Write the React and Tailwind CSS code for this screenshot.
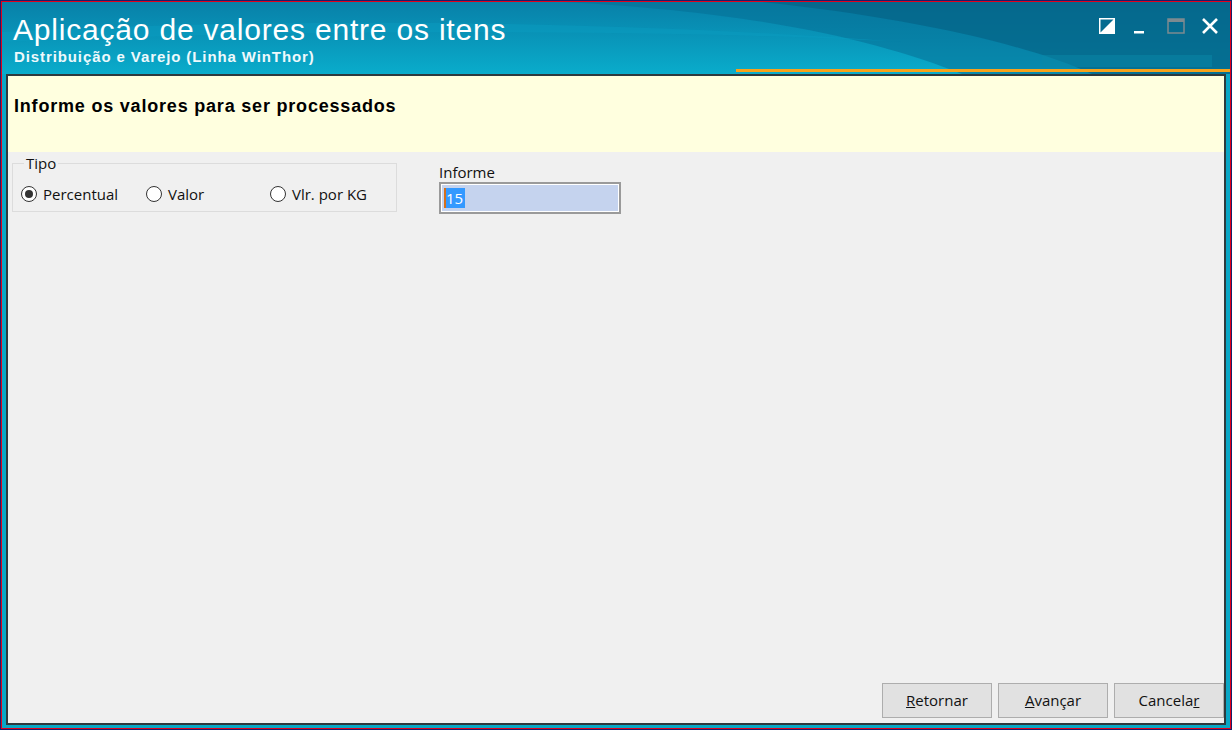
import React from 'react';

function Radio({ checked, label, className = '' }) {
  return (
    <label className={`flex items-center gap-[6px] ${className}`}>
      <span className="flex h-[16px] w-[16px] items-center justify-center rounded-full border border-[#333] bg-white">
        {checked && <span className="h-[8px] w-[8px] rounded-full bg-[#333]" />}
      </span>
      <span>{label}</span>
    </label>
  );
}

function Btn({ children }) {
  return (
    <button className="h-[35px] w-[110px] border border-[#adadad] bg-[#e1e1e1] text-[15px] text-[#111]">
      {children}
    </button>
  );
}

export default function App() {
  return (
    <div className="h-[730px] w-[1232px] border border-[#16206b] bg-[#16206b]" style={{ fontFamily: '"Open Sans", sans-serif' }}>
      <div className="flex h-full w-full flex-col border border-[#e4001b] bg-[#0aa7c6]">
        {/* title bar */}
        <div className="relative h-[72px] shrink-0 overflow-hidden bg-gradient-to-b from-[#0880a8] to-[#0aaccb]">
          <svg className="absolute inset-0" width="1228" height="72" viewBox="0 0 1228 72">
            <path d="M560 0 C760 10 880 40 960 72 L1228 72 L1228 0 Z" fill="#066f95" opacity="0.55" />
            <path d="M760 0 C900 15 1020 40 1090 72 L1228 72 L1228 0 Z" fill="#055f82" opacity="0.6" />
            <path d="M0 30 C300 15 600 18 900 40 C700 28 300 26 0 40 Z" fill="#0a9bc0" opacity="0.5" />
            <path d="M1040 53 L1210 53 L1210 65 L1040 65 Z" fill="#0a87a8" opacity="0.5" />
          </svg>
          <div className="relative pl-[11px] pt-[11px] text-white" style={{ fontFamily: '"Liberation Sans", Arial, sans-serif' }}>
            <div className="text-[30px] leading-[34px] tracking-[0.8px]">Aplicação de valores entre os itens</div>
            <div className="mt-[1px] pl-[1px] text-[15px] font-bold leading-[17px] tracking-[0.9px] text-[#eef9fc]">Distribuição e Varejo (Linha WinThor)</div>
          </div>
          <div className="absolute right-[11px] top-[15px] flex items-center">
            <svg width="16" height="16" viewBox="0 0 16 16">
              <rect x="0.75" y="0.75" width="14.5" height="14.5" fill="none" stroke="#fff" strokeWidth="1.5" />
              <path d="M15 1 L1 15 L15 15 Z" fill="#fff" />
            </svg>
            <svg className="ml-[18px]" width="12" height="16" viewBox="0 0 12 16">
              <rect x="1" y="13" width="10" height="2.5" fill="#fff" />
            </svg>
            <svg className="ml-[22px]" width="18" height="16" viewBox="0 0 18 16">
              <rect x="1" y="1" width="16" height="14" fill="none" stroke="#7c8a90" strokeWidth="1.5" />
              <rect x="1" y="1" width="16" height="3" fill="#7c8a90" />
            </svg>
            <svg className="ml-[16px]" width="18" height="18" viewBox="0 0 18 18">
              <path d="M2 2 L16 16 M16 2 L2 16" stroke="#fff" strokeWidth="2.6" />
            </svg>
          </div>
          <div className="absolute bottom-[2px] left-[734px] right-0 h-[3px] bg-[#f7a21b]" />
        </div>

        {/* content */}
        <div className="mx-[4px] mb-[3px] flex min-h-0 flex-1 flex-col border-2 border-[#2e3a3e] bg-[#f0f0f0] text-[15px] text-[#111]">
          <div className="h-[76px] shrink-0 bg-[#ffffdf] pl-[6px] pt-[17px] text-[18px] font-bold tracking-[0.8px] text-black" style={{ fontFamily: '"Liberation Sans", Arial, sans-serif' }}>
            Informe os valores para ser processados
          </div>
          <div className="flex flex-1 flex-col">
            <div className="flex items-start pt-[3px]">
              <fieldset className="ml-[4px] h-[57px] w-[385px] border border-[#dcdcdc] px-[8px]">
                <legend className="ml-[3px] px-[2px] text-[15px] leading-[16px]">Tipo</legend>
                <div className="mt-[12px] flex items-center">
                  <Radio checked label="Percentual" className="w-[125px]" />
                  <Radio label="Valor" className="w-[124px]" />
                  <Radio label="Vlr. por KG" />
                </div>
              </fieldset>
              <div className="ml-[42px] pt-[7px]">
                <div className="leading-[20px]">Informe</div>
                <div className="h-[32px] w-[182px] border-2 border-[#9a9a9a] bg-white p-[1px]">
                  <div className="flex h-full items-center bg-[#c5d3ee] pl-[2px]">
                    <span className="border-l-2 border-[#d5701a] bg-[#3399ff] pr-[2px] text-[15px] leading-[20px] text-white">15</span>
                  </div>
                </div>
              </div>
            </div>
            <div className="mt-auto flex justify-end gap-[6px] pb-[5px] pr-0">
              <Btn><span className="underline">R</span>etornar</Btn>
              <Btn><span className="underline">A</span>vançar</Btn>
              <Btn>Cancela<span className="underline">r</span></Btn>
            </div>
          </div>
        </div>
      </div>
    </div>
  );
}
